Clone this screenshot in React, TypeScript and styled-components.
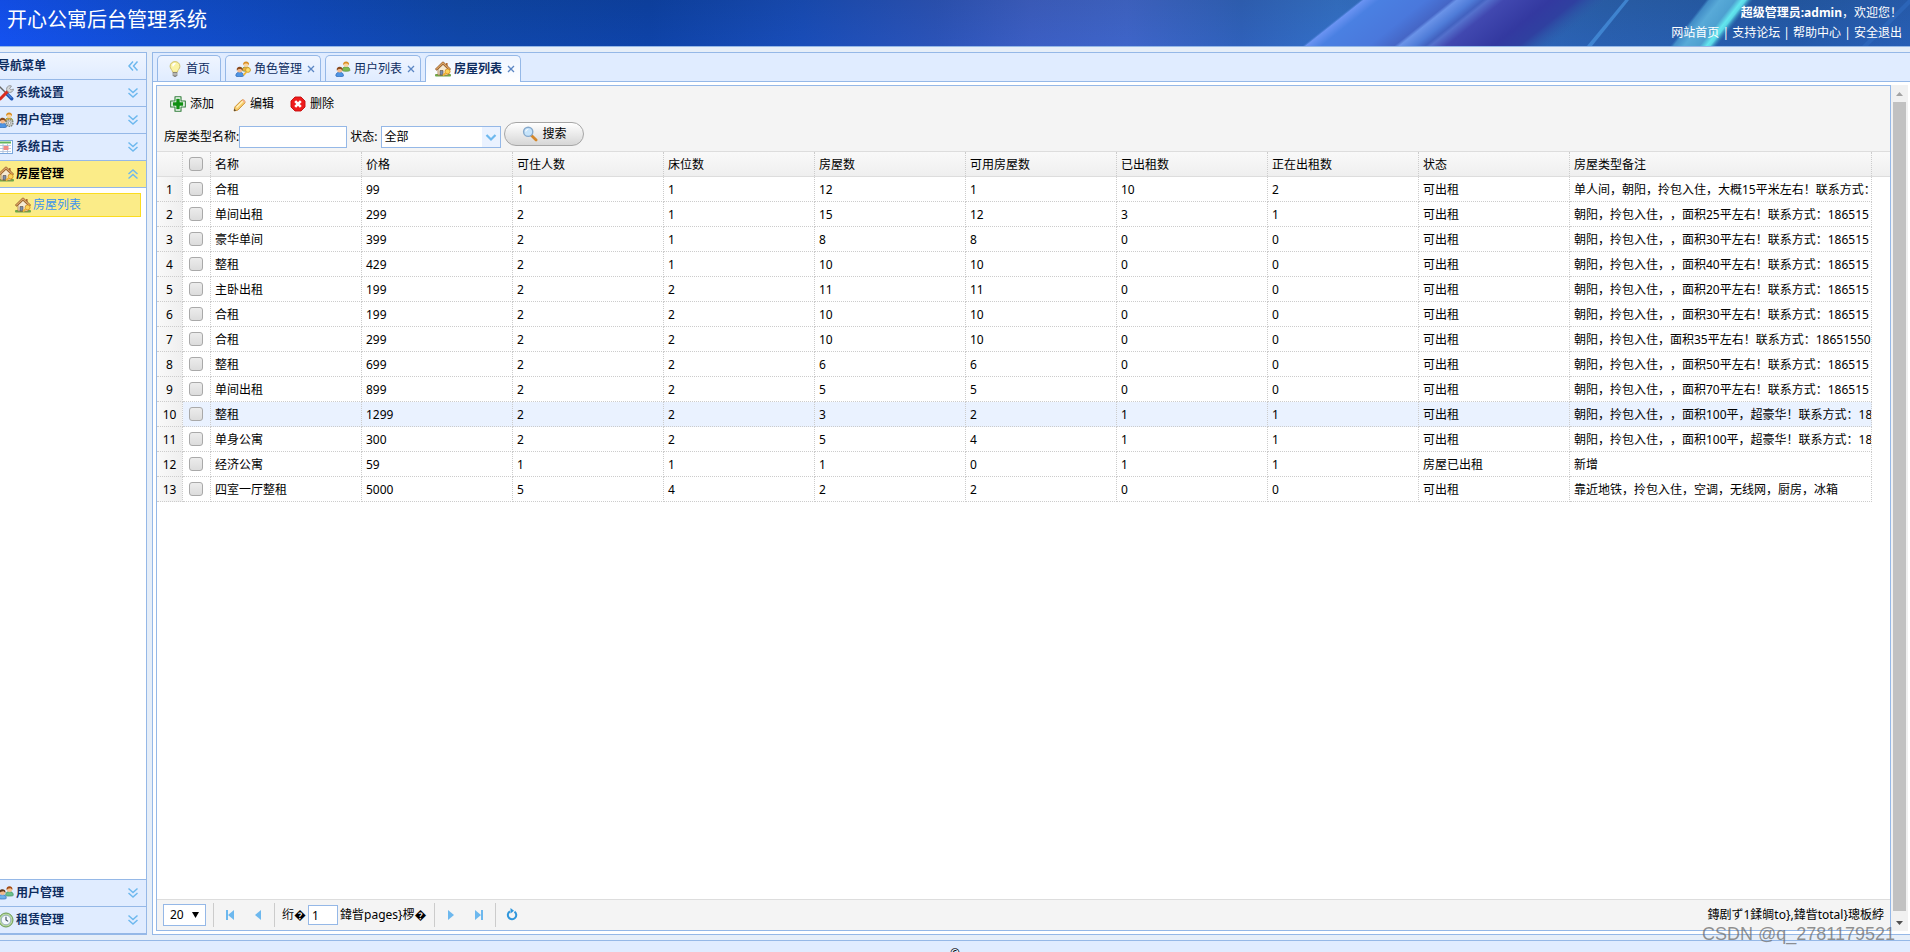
import React, { useState } from "react";
import styled, { createGlobalStyle, css } from "styled-components";

const line = "#95b8e7";
const navy = "#0e2d5f";
const sky = "#6db8ee";
const fontStack = '"Noto Sans", "Noto Sans CJK SC", sans-serif';

const GlobalStyle = createGlobalStyle`
  * { box-sizing: border-box; }
  html, body, #root { height: 100%; }
  body {
    margin: 0;
    overflow: hidden;
    background: #e6eef8;
    color: #000;
    font: 12px/16px ${fontStack};
    text-spacing-trim: space-all;
  }
  button, input, select { font: inherit; color: inherit; margin: 0; }
  button { border: 0; padding: 0; background: none; cursor: pointer; }
  a { color: inherit; text-decoration: none; }
`;

/* ---------- icons ---------- */

const Icon16 = styled.svg.attrs({ viewBox: "0 0 16 16", width: 16, height: 16, "aria-hidden": true })`
  display: block;
  flex: none;
`;

const HouseIcon = () => (
  <Icon16>
    <rect x="0" y="13" width="16" height="2.6" rx="1" fill="#6fa648" />
    <path d="M3 8.2 8 3.4l5 4.8V14H3z" fill="#f6ead2" stroke="#a97a4a" strokeWidth=".8" />
    <path d="M11 2h1.600v3H11z" fill="#b36b35" />
    <path d="M.8 8.8 8 1.8l7.2 7" fill="none" stroke="#8f5522" strokeWidth="2.4" strokeLinejoin="round" />
    <path d="M1.2 8.4 8 1.8l6.8 6.6" fill="none" stroke="#e0ab6c" strokeWidth="1.2" />
    <path d="M5 9.5h3V14H5z" fill="#7a8fae" stroke="#5f4b3a" strokeWidth=".6" />
    <circle cx="12.6" cy="10.4" r="2.5" fill="#fbd35a" stroke="#d08a1c" strokeWidth=".8" />
    <path d="m11 11.500-3 3" stroke="#f0b236" strokeWidth="1.8" />
  </Icon16>
);

const Person = ({ x, y, hair, face, body, edge }: { x: number; y: number; hair: string; face: string; body: string; edge: string }) => (
  <g transform={`translate(${x} ${y})`}>
    <path d="M0 9.3C0 6.6 1.6 5.6 3.8 5.6s3.9 1 3.9 3.7c0 1-7.7 1-7.7 0z" fill={body} stroke={edge} strokeWidth=".7" />
    <circle cx="3.9" cy="3.4" r="2.5" fill={face} />
    <path d="M1 4C.5 1.4 2 .2 3.9.2S7.3 1.4 6.8 4C6 2.8 5 2.2 3.9 2.4 2.700 2.300 1.800 2.800 1 4z" fill={hair} />
  </g>
);

const UsersIcon = ({ back = "#7cba52", extra }: { back?: string; extra?: "key" | "gear" }) => (
  <Icon16>
    <Person x={7.2} y={0.2} hair="#d98e22" face="#fbd5a0" body={back} edge="#5a8c3c" />
    <Person x={0.8} y={5.6} hair="#8a4a1c" face="#f3b98c" body="#4d94e4" edge="#2c69b4" />
    {extra === "key" && (
      <g>
        <circle cx="13" cy="9" r="2.400" fill="#fce06c" stroke="#cf9420" strokeWidth=".8" />
        <path d="m11.500 10.800-3 3.400" stroke="#f0b838" strokeWidth="1.800" />
      </g>
    )}
    {extra === "gear" && (
      <g>
        <circle cx="11.500" cy="11" r="3.400" fill="#c9ccc8" stroke="#7f847e" strokeWidth="1.400" strokeDasharray="1.500 .8" />
        <circle cx="11.500" cy="11" r="1.200" fill="#fff" stroke="#888" strokeWidth=".6" />
      </g>
    )}
  </Icon16>
);

const PairIcon = () => (
  <Icon16>
    <Person x={7.6} y={1} hair="#a34a12" face="#f7c394" body="#6cc08a" edge="#3c8e5c" />
    <Person x={0.6} y={4} hair="#5a3519" face="#f3b98c" body="#6fb0ea" edge="#2c69b4" />
  </Icon16>
);

const BulbIcon = () => (
  <Icon16>
    <path d="M8 .6c3 0 4.900 2.100 4.900 4.700 0 2.500-2.300 3.600-2.600 6H5.700c-.3-2.400-2.600-3.500-2.600-6C3.100 2.700 5 .6 8 .6z" fill="#fbf3a4" stroke="#c9ba68" strokeWidth=".9" />
    <path d="M6 2.600c1-.8 2.400-.8 3 0-1 .8-2.500 2-3 3.400-1-1-.8-2.600 0-3.400z" fill="#fff" />
    <path d="M6 11.500h4v3l-1 1H7l-1-1z" fill="#9a9a96" stroke="#6c6c6c" strokeWidth=".6" />
    <path d="M6 13h4" stroke="#e8e8e8" strokeWidth=".7" />
  </Icon16>
);

const ToolsIcon = () => (
  <Icon16>
    <path d="m1.500 1.500 7 7" stroke="#666" strokeWidth="1.500" />
    <path d="m8.500 8.500 5.200 5.300" stroke="#2158b8" strokeWidth="3.400" strokeLinecap="round" />
    <path d="m9 8.500 4.500 4.600" stroke="#6aa2f0" strokeWidth="1" />
    <path d="m11 5-8.600 8.800" stroke="#d92c20" strokeWidth="3" strokeLinecap="round" />
    <path d="M13.500 1A3.400 3.400 0 1 0 15.400 4l-2.200.9-1.500-1.500z" fill="#d5d8da" stroke="#85898c" strokeWidth=".8" />
  </Icon16>
);

const LogIcon = () => (
  <Icon16>
    <rect x=".5" y="1.500" width="14" height="13" fill="#fff" stroke="#7aa7dc" />
    <path d="M2 3.500h11" stroke="#63b55c" strokeWidth="2" />
    <path d="M2 6.500h11M2 9.500h11M2 12.500h11M5 5v9M9.500 5v9" stroke="#a9bcd8" strokeWidth=".8" />
    <path d="M5.500 7h5v4h-5z" fill="#f28a84" />
  </Icon16>
);

const ClockIcon = () => (
  <Icon16>
    <circle cx="8" cy="8" r="7" fill="#b9d9a0" stroke="#6c9a52" />
    <circle cx="8" cy="8" r="4.800" fill="#f4f8fd" stroke="#8aa2bb" strokeWidth=".8" />
    <path d="M8 4.800V8l2.200 1.400" fill="none" stroke="#345" strokeWidth="1.100" />
  </Icon16>
);

const AddIcon = () => (
  <Icon16>
    <path d="M5 .7h6v4.300h4.300v6H11v4.300H5V11H.7V5H5z" fill="#fff" stroke="#2f7d38" strokeWidth="1.100" strokeLinejoin="round" />
    <path d="M6.300 2.800h3.400v3.500h3.500v3.400H9.700v3.500H6.300V9.700H2.800V6.300h3.500z" fill="#0f8f12" />
  </Icon16>
);

const PencilIcon = () => (
  <Icon16>
    <path d="M4 15l1-4.200L11.800 4c1-1 4 1.200 3 3L8 14z" fill="#f9cf6d" stroke="#c78a2c" strokeWidth=".9" />
    <path d="m6.500 11.500 6.300-6.300" stroke="#fff2c4" strokeWidth="1.300" />
    <path d="m12 4 .8-.5c1.200-.4 2.800 1 2.200 2.500l-.5 1z" fill="#f3ab8f" />
    <path d="M4 15l.6-2.200L6 14.500z" fill="#333" />
  </Icon16>
);

const DeleteIcon = () => (
  <Icon16>
    <path d="M5 1h6l4 4v6l-4 4H5l-4-4V5z" fill="#ee1c1c" stroke="#c40c0c" strokeWidth=".9" strokeLinejoin="round" />
    <path d="m5.200 5.200 5.600 5.600m0-5.600-5.600 5.600" stroke="#fff" strokeWidth="2.600" />
  </Icon16>
);

const SearchIcon = () => (
  <Icon16>
    <path d="m9.500 9.500 4.600 4.400" stroke="#d4872a" strokeWidth="2.800" strokeLinecap="round" />
    <circle cx="6.200" cy="5.800" r="4.600" fill="#c6e4fb" stroke="#86a9cc" strokeWidth="1.400" />
    <path d="M3.700 5.500c.2-1.400 1.200-2 2.500-2" fill="none" stroke="#fff" strokeWidth="1.200" />
  </Icon16>
);

const DoubleChevron = styled(Icon16)<{ $turn?: number }>`
  margin-left: auto;
  fill: none;
  stroke: ${sky};
  stroke-width: 1.5;
  transform: rotate(${(p) => p.$turn ?? 0}deg);
`;
const Chevrons = ({ turn = 0 }: { turn?: number }) => (
  <DoubleChevron $turn={turn}>
    <path d="m3.500 3.500 4.500 4 4.500-4M3.500 8l4.500 4 4.500-4" />
  </DoubleChevron>
);

/* ---------- page frame ---------- */

const Page = styled.div`
  position: relative;
  display: flex;
  flex-direction: column;
  height: 100vh;
  overflow: hidden;
`;

const Banner = styled.header`
  position: relative;
  display: flex;
  flex: none;
  justify-content: space-between;
  height: 47px;
  border-bottom: 1px solid ${line};
  color: #fff;
  background:
    linear-gradient(to bottom, rgba(0, 30, 90, 0.1), rgba(20, 80, 230, 0.1)),
    linear-gradient(to right, #1452f2 0%, #124fd0 8%, #114abb 16%, #1047a5 24%, #0e42a2 34%, #1a4db4 42%,
      #2e54b4 49%, #4060c0 54%, #4367c6 59%, #3263b6 65%, #3773c4 70%, #2c62ab 84%, #265ba4 94%, #2a60b0 100%);
`;

const Beams = styled.svg`
  position: absolute;
  right: 0;
  top: 0;
  width: 620px;
  height: 46px;
`;

const Title = styled.h1`
  position: relative;
  margin: 0;
  padding: 6px 7px;
  font-size: 20px;
  font-weight: 400;
  line-height: 28px;
`;

const Account = styled.div`
  position: relative;
  padding: 3px 8px;
  line-height: 20px;
  text-align: right;
  white-space: pre;
`;

const Middle = styled.div`
  display: flex;
  flex: 1;
  min-height: 0;
  gap: 5px;
  padding: 5px 0;
`;

const Footer = styled.footer`
  flex: none;
  height: 12px;
  padding-top: 5px;
  overflow: hidden;
  border-top: 1px solid ${line};
  background: #e0ecff;
  text-align: center;
`;

/* ---------- sidebar ---------- */

const Sidebar = styled.aside`
  display: flex;
  flex: none;
  flex-direction: column;
  width: 154px;
  margin-left: -7px;
  border: 1px solid ${line};
  background: #fff;
`;

const BarTitle = styled.h2`
  display: flex;
  flex: none;
  align-items: center;
  height: 27px;
  margin: 0;
  padding: 0 5px 0 4px;
  border-bottom: 1px solid ${line};
  background: linear-gradient(to bottom, #eff5ff, #e0ecff);
  color: ${navy};
  font-size: 12px;
  font-weight: 700;
`;

const Section = styled.button<{ $open?: boolean }>`
  display: flex;
  flex: none;
  align-items: center;
  gap: 2px;
  height: 27px;
  padding: 0 5px 0 4px;
  border-bottom: 1px solid ${line};
  background: ${(p) => (p.$open ? "#fbec88" : "#e0ecff")};
  color: ${(p) => (p.$open ? "#000" : navy)};
  font-weight: 700;
`;

const SectionBody = styled.div`
  flex: 1;
  padding: 5px;
  padding-left: 0;
  border-bottom: 1px solid ${line};
`;

const NavLink = styled.a`
  display: flex;
  align-items: center;
  gap: 2px;
  height: 24px;
  padding-left: 20px;
  border: 1px solid #fbdc20;
  background: #fbec88;
  color: #3d94f0;
`;

/* ---------- tabs ---------- */

const Main = styled.main`
  display: flex;
  flex: 1;
  flex-direction: column;
  min-width: 0;
  border: 1px solid ${line};
  border-right: 0;
  background: #fff;
`;

const TabBar = styled.nav`
  display: flex;
  flex: none;
  gap: 4px;
  height: 29px;
  padding: 2px 4px 0;
  border-bottom: 1px solid ${line};
  background: #e0ecff;
`;

const Tab = styled.button<{ $active?: boolean; $fixed?: boolean }>`
  display: flex;
  align-items: center;
  gap: 3px;
  height: 26px;
  padding: 0 ${(p) => (p.$fixed ? 8 : 5)}px 0 9px;
  border: 1px solid ${line};
  border-bottom: 0;
  border-radius: 5px 5px 0 0;
  background: linear-gradient(to bottom, #eff5ff, #e0ecff);
  color: ${navy};
  ${(p) =>
    p.$active &&
    css`
      height: 27px;
      background: linear-gradient(to bottom, #eff5ff, #fff);
      font-weight: 700;
    `}
`;

const TabText = styled.span`
  display: block;
  margin-right: 2px;
`;

const Cross = styled.svg.attrs({ viewBox: "0 0 8 8", width: 8, height: 8, "aria-hidden": true })`
  stroke: #5b86c4;
  stroke-width: 1.300;
`;

const TabBody = styled.section`
  display: flex;
  flex: 1;
  min-height: 0;
  padding: 3px 2px 3px 3px;
`;

const Grid = styled.div`
  display: flex;
  flex: 1;
  flex-direction: column;
  min-width: 0;
  border: 1px solid ${line};
`;

const ScrollTrack = styled.div`
  display: flex;
  flex: none;
  flex-direction: column;
  align-items: center;
  width: 17px;
  background: #f1f1f1;
`;

const ScrollArrow = styled.svg.attrs({ viewBox: "0 0 17 17", width: 17, height: 17, "aria-hidden": true })`
  flex: none;
`;

const ScrollThumb = styled.div`
  flex: 1;
  width: 13px;
  margin-bottom: 3px;
  background: #c1c1c1;
`;

/* ---------- toolbar ---------- */

const Toolbar = styled.div`
  flex: none;
  height: 66px;
  border-bottom: 1px solid #ddd;
  background: #f4f4f4;
`;

const ToolRow = styled.div`
  display: flex;
  gap: 16px;
  padding: 9px 13px 0;
`;

const ToolButton = styled.button`
  display: flex;
  align-items: center;
  gap: 4px;
  height: 17px;
`;

const SearchForm = styled.form`
  display: flex;
  align-items: center;
  height: 26px;
  margin-top: 10px;
  padding-left: 7px;
`;

const FieldLabel = styled.label`
  padding-top: 4px;
  white-space: nowrap;
`;

const TextField = styled.input`
  width: 108px;
  height: 22px;
  margin: 4px 3px 0 0;
  padding: 0 3px;
  border: 1px solid ${line};
  background: #fff;
  outline: 0;
`;

const SelectBox = styled.span<{ $width: number }>`
  position: relative;
  display: block;
  flex: none;
  width: ${(p) => p.$width}px;
  height: 22px;
`;

const SelectField = styled.select<{ $inset: number }>`
  width: 100%;
  height: 100%;
  padding: 0 0 0 ${(p) => p.$inset}px;
  border: 1px solid ${line};
  border-radius: 0;
  background: #fff;
  appearance: none;
  outline: 0;
`;

const SelectArrow = styled.svg<{ $fill?: string }>`
  position: absolute;
  top: 1px;
  right: 1px;
  width: 18px;
  height: 20px;
  background: ${(p) => p.$fill ?? "transparent"};
  pointer-events: none;
`;

const StatusSelect = styled.div`
  margin: 4px 3px 0 4px;
`;

const SearchButton = styled.button`
  display: flex;
  align-items: center;
  justify-content: center;
  gap: 4px;
  width: 80px;
  height: 24px;
  margin-bottom: 2px;
  border: 1px solid #a6a6a6;
  border-radius: 12px;
  background: linear-gradient(to bottom, #fff, #d6d6d6);
`;

/* ---------- table ---------- */

const TableArea = styled.div`
  flex: 1;
  min-height: 0;
  overflow: hidden;
`;

const Table = styled.table`
  width: calc(100% - 18px);
  border-collapse: separate;
  border-spacing: 0;
  table-layout: fixed;
`;

const cell = css`
  height: 25px;
  padding: 2px 4px 0;
  border-right: 1px dotted #ccc;
  overflow: hidden;
  text-align: left;
  font-weight: 400;
  white-space: nowrap;
`;

const HeadStrip = styled.div`
  background: linear-gradient(to bottom, #f9f9f9, #efefef);
  border-bottom: 1px solid #ddd;
`;

const HeadCell = styled.th`
  ${cell}
  height: 24px;
`;

const Cell = styled.td`
  ${cell}
  border-bottom: 1px dotted #ccc;
`;

const NumberCell = styled.th`
  ${cell}
  padding: 2px 0 0;
  border-bottom: 1px dotted #ccc;
  background: linear-gradient(to right, #f9f9f9, #efefef);
  text-align: center;
`;

const Row = styled.tr<{ $hover?: boolean }>`
  background: ${(p) => (p.$hover ? "#eaf2ff" : "#fff")};
`;

const Check = styled.input.attrs({ type: "checkbox" })`
  display: block;
  width: 14px;
  height: 14px;
  margin: 0 0 3px 2px;
  border: 1px solid #a9a9a9;
  border-radius: 3px;
  background: linear-gradient(to bottom, #ececec, #dcdcdc);
  appearance: none;
  &:checked { background: ${sky}; }
`;

/* ---------- pager ---------- */

const Pager = styled.div`
  display: flex;
  flex: none;
  align-items: center;
  height: 31px;
  padding: 0 6px;
  border-top: 1px solid #ddd;
  background: #f4f4f4;
`;

const PageSize = styled.div`
  margin-right: 5px;
`;

const Divider = styled.span`
  width: 1px;
  height: 24px;
  margin: 0 2px;
  background: #ccc;
`;

const PageButton = styled.button`
  padding: 0 6px;
`;

const PageGroup = styled.div`
  display: flex;
  align-items: center;
  color: ${sky};
`;

const PageLabel = styled.label`
  display: flex;
  align-items: center;
  gap: 2px;
  padding: 0 5px;
`;

const PageInput = styled.input`
  width: 30px;
  height: 20px;
  padding: 0 3px;
  border: 1px solid ${line};
  background: #fff;
  outline: 0;
`;

const Summary = styled.span`
  margin-left: auto;
`;

const Watermark = styled.div`
  position: absolute;
  right: 15px;
  bottom: 6px;
  color: rgba(110, 110, 110, 0.75);
  font: 18px/24px "Liberation Sans", sans-serif;
  pointer-events: none;
`;

/* ---------- data ---------- */

const columns = ["名称", "价格", "可住人数", "床位数", "房屋数", "可用房屋数", "已出租数", "正在出租数", "状态"];

const note = (area: number) => `朝阳，拎包入住，，面积${area}平左右！联系方式：186515`;
const rows: string[][] = [
  ["合租", "99", "1", "1", "12", "1", "10", "2", "可出租", "单人间，朝阳，拎包入住，大概15平米左右！联系方式："],
  ["单间出租", "299", "2", "1", "15", "12", "3", "1", "可出租", note(25)],
  ["豪华单间", "399", "2", "1", "8", "8", "0", "0", "可出租", note(30)],
  ["整租", "429", "2", "1", "10", "10", "0", "0", "可出租", note(40)],
  ["主卧出租", "199", "2", "2", "11", "11", "0", "0", "可出租", note(20)],
  ["合租", "199", "2", "2", "10", "10", "0", "0", "可出租", note(30)],
  ["合租", "299", "2", "2", "10", "10", "0", "0", "可出租", "朝阳，拎包入住，面积35平左右！联系方式：18651550"],
  ["整租", "699", "2", "2", "6", "6", "0", "0", "可出租", note(50)],
  ["单间出租", "899", "2", "2", "5", "5", "0", "0", "可出租", note(70)],
  ["整租", "1299", "2", "2", "3", "2", "1", "1", "可出租", "朝阳，拎包入住，，面积100平，超豪华！联系方式：18"],
  ["单身公寓", "300", "2", "2", "5", "4", "1", "1", "可出租", "朝阳，拎包入住，，面积100平，超豪华！联系方式：18"],
  ["经济公寓", "59", "1", "1", "1", "0", "1", "1", "房屋已出租", "新增"],
  ["四室一厅整租", "5000", "5", "4", "2", "2", "0", "0", "可出租", "靠近地铁，拎包入住，空调，无线网，厨房，冰箱"],
];

const NarrowCol = styled.col<{ $width: number }>`
  width: ${(p) => p.$width}px;
`;

const Columns = () => (
  <colgroup>
    <NarrowCol $width={26} />
    <NarrowCol $width={28} />
    {Array.from({ length: 11 }, (_, i) => (
      <col key={i} />
    ))}
  </colgroup>
);

const closeCross = (
  <Cross>
    <path d="m1 1 6 6m0-6-6 6" />
  </Cross>
);

export default function App() {
  const [name, setName] = useState("");
  const [page, setPage] = useState("1");

  return (
    <Page>
      <GlobalStyle />
      <Banner>
        <Beams viewBox="0 0 620 46" aria-hidden>
          <defs>
            <linearGradient id="wide" gradientUnits="userSpaceOnUse" x1="0" y1="46" x2="100.400" y2="172.600">
              <stop offset=".045" stopColor="#3773c4" stopOpacity="0" />
              <stop offset=".06" stopColor="#6a93f2" />
              <stop offset=".12" stopColor="#4a80e2" />
              <stop offset=".3" stopColor="#4a78dc" />
              <stop offset=".4" stopColor="#4566c6" />
              <stop offset=".42" stopColor="#6a93e8" />
              <stop offset=".48" stopColor="#4f7cd8" />
              <stop offset=".52" stopColor="#4262c0" />
              <stop offset=".54" stopColor="#5470cc" />
              <stop offset=".6" stopColor="#4148b0" />
              <stop offset=".78" stopColor="#3339a0" />
              <stop offset=".88" stopColor="#2f40a0" />
              <stop offset="1" stopColor="#2c5ba8" stopOpacity="0" />
            </linearGradient>
            <linearGradient id="cyan" gradientUnits="userSpaceOnUse" x1="380" y1="46" x2="423.400" y2="80">
              <stop offset="0" stopColor="#3f8cc8" stopOpacity="0" />
              <stop offset=".05" stopColor="#4a9ad0" stopOpacity=".8" />
              <stop offset=".2" stopColor="#58aad8" />
              <stop offset=".42" stopColor="#4ea0d0" />
              <stop offset=".52" stopColor="#63e6ee" />
              <stop offset=".57" stopColor="#5ad8e6" />
              <stop offset=".68" stopColor="#2c78b4" stopOpacity="0" />
            </linearGradient>
          </defs>
          <rect width="340" height="46" fill="url(#wide)" />
          <rect x="340" width="160" height="46" fill="url(#cyan)" />
          <path d="m297 46 38-46h4l-37 46z" fill="#4790dc" opacity=".75" />
          <path d="m572 46 46-46h2v4l-42 42z" fill="#2f69bd" opacity=".7" />
        </Beams>
        <Title>开心公寓后台管理系统</Title>
        <Account>
          <div>
            <strong>超级管理员:admin</strong>，欢迎您！
          </div>
          <div>
            <a href="#home">网站首页</a> | <a href="#forum">支持论坛</a> | <a href="#help">帮助中心</a> |{" "}
            <a href="#exit">安全退出</a>
          </div>
        </Account>
      </Banner>

      <Middle>
        <Sidebar>
          <BarTitle>
            导航菜单
            <Chevrons turn={90} />
          </BarTitle>
          <Section><ToolsIcon />系统设置<Chevrons /></Section>
          <Section><UsersIcon extra="gear" back="#efb040" />用户管理<Chevrons /></Section>
          <Section><LogIcon />系统日志<Chevrons /></Section>
          <Section $open><HouseIcon />房屋管理<Chevrons turn={180} /></Section>
          <SectionBody>
            <NavLink href="#rooms"><HouseIcon />房屋列表</NavLink>
          </SectionBody>
          <Section><PairIcon />用户管理<Chevrons /></Section>
          <Section><ClockIcon />租赁管理<Chevrons /></Section>
        </Sidebar>

        <Main>
          <TabBar>
            <Tab $fixed><BulbIcon /><TabText>首页</TabText></Tab>
            <Tab><UsersIcon extra="key" back="#efb040" /><TabText>角色管理</TabText>{closeCross}</Tab>
            <Tab><UsersIcon /><TabText>用户列表</TabText>{closeCross}</Tab>
            <Tab $active><HouseIcon /><TabText>房屋列表</TabText>{closeCross}</Tab>
          </TabBar>
          <TabBody>
            <Grid>
              <Toolbar>
                <ToolRow>
                  <ToolButton><AddIcon />添加</ToolButton>
                  <ToolButton><PencilIcon />编辑</ToolButton>
                  <ToolButton><DeleteIcon />删除</ToolButton>
                </ToolRow>
                <SearchForm onSubmit={(e) => e.preventDefault()}>
                  <FieldLabel htmlFor="type-name">房屋类型名称:</FieldLabel>
                  <TextField id="type-name" value={name} onChange={(e) => setName(e.target.value)} />
                  <FieldLabel htmlFor="status">状态:</FieldLabel>
                  <StatusSelect>
                    <SelectBox $width={120}>
                      <SelectField id="status" $inset={2}>
                        <option>全部</option>
                      </SelectField>
                      <SelectArrow viewBox="0 0 18 20" $fill="#eaf2ff">
                        <path d="m4.500 8 4.500 4.500L13.500 8" fill="none" stroke={sky} strokeWidth="2.200" />
                      </SelectArrow>
                    </SelectBox>
                  </StatusSelect>
                  <SearchButton type="submit"><SearchIcon />搜索</SearchButton>
                </SearchForm>
              </Toolbar>

              <TableArea>
                <HeadStrip>
                  <Table aria-label="房屋列表">
                    <Columns />
                    <thead>
                      <tr>
                        <HeadCell />
                        <HeadCell><Check /></HeadCell>
                        {columns.map((c) => (
                          <HeadCell key={c}>{c}</HeadCell>
                        ))}
                        <HeadCell colSpan={2}>房屋类型备注</HeadCell>
                      </tr>
                    </thead>
                  </Table>
                </HeadStrip>
                <Table>
                  <Columns />
                  <tbody>
                    {rows.map((row, i) => (
                      <Row key={i} $hover={i === 9}>
                        <NumberCell scope="row">{i + 1}</NumberCell>
                        <Cell><Check /></Cell>
                        {row.map((value, j) => (
                          <Cell key={j} colSpan={j === 9 ? 2 : 1}>{value}</Cell>
                        ))}
                      </Row>
                    ))}
                  </tbody>
                </Table>
              </TableArea>

              <Pager>
                <PageSize>
                  <SelectBox $width={43}>
                    <SelectField $inset={6} aria-label="20">
                      <option>20</option>
                    </SelectField>
                    <SelectArrow viewBox="0 0 18 20">
                      <path d="M5 7h7l-3.500 6z" fill="#000" />
                    </SelectArrow>
                  </SelectBox>
                </PageSize>
                <Divider />
                <PageGroup>
                  <PageButton><Icon16><path d="M4 3h2v10H4zM12 3v10L6 8z" fill="currentColor" /></Icon16></PageButton>
                  <PageButton><Icon16><path d="M11 3v10L5 8z" fill="currentColor" /></Icon16></PageButton>
                </PageGroup>
                <Divider />
                <PageLabel>
                  绗�
                  <PageInput value={page} onChange={(e) => setPage(e.target.value)} />
                  {"鍏眥pages}椤�"}
                </PageLabel>
                <Divider />
                <PageGroup>
                  <PageButton><Icon16><path d="M5 3v10l6-5z" fill="currentColor" /></Icon16></PageButton>
                  <PageButton><Icon16><path d="M10 3h2v10h-2zM4 3v10l6-5z" fill="currentColor" /></Icon16></PageButton>
                </PageGroup>
                <Divider />
                <PageButton>
                  <Icon16>
                    <path d="M10.500 4.600a4.200 4.200 0 1 1-4.600-.2" fill="none" stroke="#2f96dc" strokeWidth="2" />
                    <path d="M6.500 1v5.600L10 3.800z" fill="#2f96dc" />
                  </Icon16>
                </PageButton>
                <Summary>{"鏄剧ず1鍒皗to},鍏眥total}璁板綍"}</Summary>
              </Pager>
            </Grid>
            <ScrollTrack>
              <ScrollArrow><path d="M5 11h7L8.500 7z" fill="#a3a3a3" /></ScrollArrow>
              <ScrollThumb />
              <ScrollArrow><path d="M5 7h7l-3.500 4z" fill="#505050" /></ScrollArrow>
            </ScrollTrack>
          </TabBody>
        </Main>
      </Middle>
      <Footer>©</Footer>
      <Watermark>CSDN @q_2781179521</Watermark>
    </Page>
  );
}
